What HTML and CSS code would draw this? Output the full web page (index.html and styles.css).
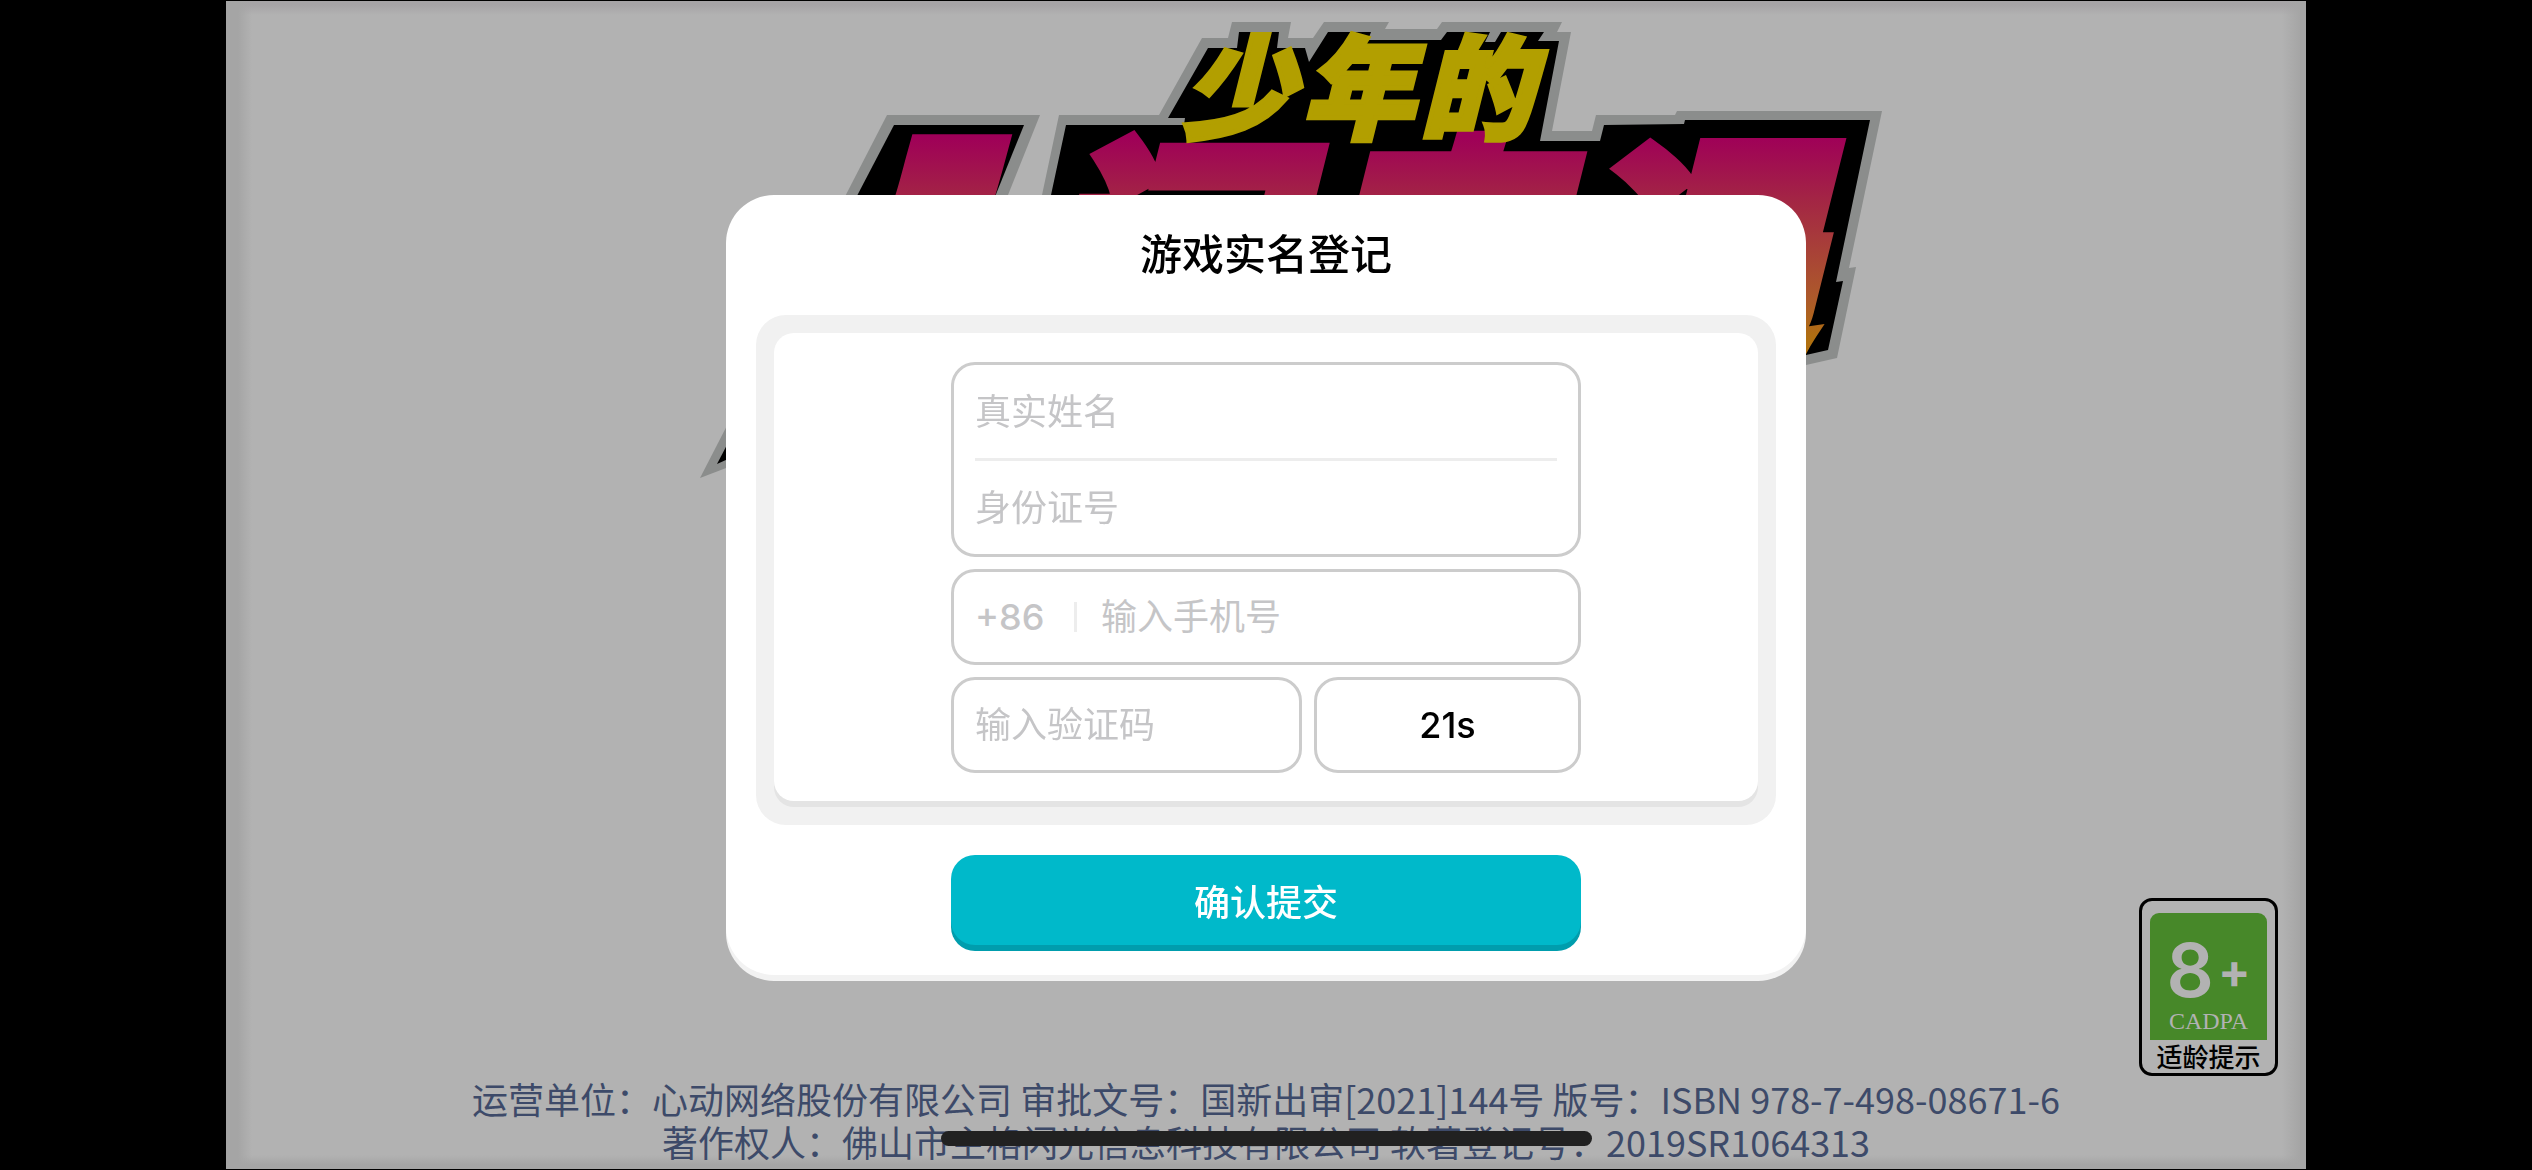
FILE: index.html
```html
<!DOCTYPE html>
<html lang="zh-CN">
<head>
  <meta charset="UTF-8">
  <meta name="viewport" content="width=device-width, initial-scale=1.0">
  <title>游戏实名登记</title>
  <link rel="stylesheet" href="styles.css">
</head>
<body>
  <main class="stage">
    <svg class="logo" viewBox="226 1 2080 500" role="img" aria-label="少年的人间奇遇">
      <defs>
        <linearGradient id="sunset" gradientUnits="userSpaceOnUse" x1="0" y1="137" x2="0" y2="340">
          <stop offset="0" stop-color="#9f0058"/>
          <stop offset="0.3" stop-color="#a32445"/>
          <stop offset="0.55" stop-color="#a84038"/>
          <stop offset="0.8" stop-color="#ad5a2a"/>
          <stop offset="1" stop-color="#b07010"/>
        </linearGradient>
      </defs>
      <!-- backing plate -->
      <g fill="#8b8d8c">
        <polygon points="887,115 1040,115 930,390 700,478"/>
        <polygon points="1059,115 1159,115 1202,38 1228,38 1232,22 1291,22 1288,38 1313,38 1324,22 1389,22 1385,29 1437,29 1442,22 1562,22 1557,32 1571,32 1552,131 1592,131 1596,115 1675,115 1677,111 1882,111 1849,268 1856,267 1837,358 1806,365 1042,365 1042,195"/>
      </g>
      <g fill="#000">
        <polygon points="894,125 1024,125 925,370 717,464"/>
        <polygon points="1066,125 1184,125 1185,118 1168,118 1208,48 1237,48 1239,32 1279,32 1277,48 1305,48 1309,62 1328,32 1371,32 1368,40 1441,40 1447,32 1490,32 1485,42 1495,42 1501,32 1544,32 1538,41 1559,41 1540,141 1600,141 1604,125 1684,124 1685,120 1870,120 1836,282 1843,281 1828,350 1806,355 1051,355 1051,195"/>
      </g>
      <text class="logo-main logo-first" x="780" y="376">人</text>
      <text class="logo-main" x="1032 1304 1562" y="352">间奇遇</text>
      <text class="logo-sub" x="1182 1302 1420" y="130">少年的</text>
    </svg>

    <aside class="age-badge">
      <div class="age-box">
        <div class="age">8<span class="plus">+</span></div>
        <div class="cadpa">CADPA</div>
      </div>
      <div class="age-tip">适龄提示</div>
    </aside>

    <footer class="legal">
      <p>运营单位：心动网络股份有限公司 审批文号：国新出审[2021]144号 版号：ISBN 978-7-498-08671-6</p>
      <p>著作权人：佛山市主格闪光信息科技有限公司 软著登记号：2019SR1064313</p>
    </footer>
  </main>

  <div class="overlay">
    <form class="modal">
      <h1>游戏实名登记</h1>
      <div class="panel">
        <div class="panel-inner">
          <div class="fields">
            <div class="box">
              <input type="text" name="realname" placeholder="真实姓名" aria-label="真实姓名">
              <hr>
              <input type="text" name="idcard" placeholder="身份证号" aria-label="身份证号">
            </div>
            <div class="box phone">
              <label for="phone">+86</label>
              <input type="tel" id="phone" name="phone" placeholder="输入手机号">
            </div>
            <div class="row">
              <div class="box code">
                <input type="text" name="code" placeholder="输入验证码" aria-label="输入验证码">
              </div>
              <button type="button" class="box countdown">21s</button>
            </div>
          </div>
        </div>
      </div>
      <button type="button" class="submit">确认提交</button>
    </form>
  </div>

  <div class="home-bar"></div>
</body>
</html>
```

FILE: styles.css
```css
* {
  box-sizing: border-box;
}

body {
  margin: 0;
  padding: 1px 226px;
  min-height: 100vh;
  display: flex;
  background: #000;
  font-family: Inter, "Noto Sans CJK SC", sans-serif;
  font-size: 36px;
}

/* game screen behind the dialog */
.stage {
  position: relative;
  flex: 1;
  display: flex;
  flex-direction: column;
  justify-content: space-between;
  background:
    linear-gradient(90deg, #a5a5a5 12px, transparent 26px),
    linear-gradient(270deg, #a5a5a5 6px, transparent 24px),
    linear-gradient(#a6a4a6 4px, transparent 14px),
    linear-gradient(0deg, #a5a5a5 4px, transparent 14px),
    #b2b2b2;
}

.logo {
  display: block;
  width: 100%;
}

.logo text {
  font-family: "Noto Sans CJK SC", sans-serif;
  font-weight: 900;
  font-style: italic;
}

.logo-main {
  font-size: 250px;
  fill: url(#sunset);
  stroke: url(#sunset);
  stroke-width: 14px;
}

.logo-first {
  stroke-width: 56px;
}

.logo-sub {
  font-size: 112px;
  fill: #b29f00;
  stroke: #b29f00;
  stroke-width: 5px;
}

.legal {
  padding-bottom: 6px;
  color: #3d4a69;
  font-family: "Noto Sans CJK SC", sans-serif;
  line-height: 43px;
  text-align: center;
}

.legal p {
  margin: 0;
}

.age-badge {
  position: absolute;
  right: 28px;
  bottom: 93px;
  width: 139px;
  padding: 12px 8px 1px;
  border: 3px solid #000;
  border-radius: 13px;
  text-align: center;
}

.age-box {
  height: 127px;
  padding-top: 20px;
  border-radius: 9px 9px 0 0;
  background: #478829;
  color: #b2b2b2;
}

.age {
  display: flex;
  justify-content: center;
  align-items: center;
  gap: 4px;
  height: 74px;
  font-size: 74px;
  font-weight: 600;
}

.plus {
  font-size: 48px;
  font-weight: 700;
}

.cadpa {
  font-family: "Liberation Serif", serif;
  font-size: 24px;
  line-height: 28px;
}

.age-tip {
  font-family: "Noto Sans CJK SC", sans-serif;
  font-size: 26px;
  font-weight: 500;
  line-height: 32px;
}

/* dialog */
.overlay {
  position: fixed;
  inset: 0;
  display: flex;
  justify-content: center;
  align-items: center;
}

.modal {
  width: 1080px;
  max-width: 100%;
  padding: 0 30px 30px;
  border-radius: 48px;
  background: #fff;
  box-shadow: 0 6px 0 #f2f2f2;
}

.modal h1 {
  margin: 0;
  font-size: 42px;
  font-weight: 500;
  line-height: 120px;
  text-align: center;
}

.panel {
  padding: 18px 18px 24px;
  border-radius: 30px;
  background: #f1f1f1;
}

.panel-inner {
  padding: 29px 0 28px;
  border-radius: 20px;
  background: #fff;
  box-shadow: 0 6px 0 #e4e4e4;
}

.fields {
  display: flex;
  flex-direction: column;
  gap: 12px;
  width: 630px;
  max-width: 100%;
  margin: 0 auto;
}

.box {
  border: 3px solid #ccc;
  border-radius: 24px;
  background: #fff;
}

.box input {
  display: block;
  width: 100%;
  height: 93px;
  padding: 0 21px;
  border: 0;
  outline: 0;
  background: none;
  font: inherit;
}

.box input::placeholder {
  color: #c5c5c7;
}

.box hr {
  height: 3px;
  margin: 0 21px;
  border: 0;
  background: #ededed;
}

.box.phone input,
.box.code input {
  height: 90px;
}

.box.phone input {
  padding-left: 24px;
}

.phone {
  display: flex;
  align-items: center;
}

.phone label {
  flex: none;
  width: 102px;
  margin-left: 21px;
  border-right: 3px solid #ededed;
  color: #c5c5c7;
  font-weight: 500;
  line-height: 30px;
}

.row {
  display: flex;
  gap: 12px;
}

.code {
  flex: 1;
}

.countdown {
  width: 267px;
  padding: 0;
  color: #000;
  font: inherit;
  font-weight: 500;
}

.submit {
  display: block;
  width: 630px;
  max-width: 100%;
  height: 90px;
  margin: 30px auto 0;
  border: 0;
  border-radius: 24px;
  background: #00b9ca;
  box-shadow: 0 6px 0 #009dad;
  color: #fff;
  font: inherit;
  font-weight: 500;
}

.home-bar {
  position: fixed;
  left: 50%;
  bottom: 24px;
  width: 651px;
  height: 15px;
  margin-left: -325px;
  border-radius: 8px;
  background: #212121;
}
```
